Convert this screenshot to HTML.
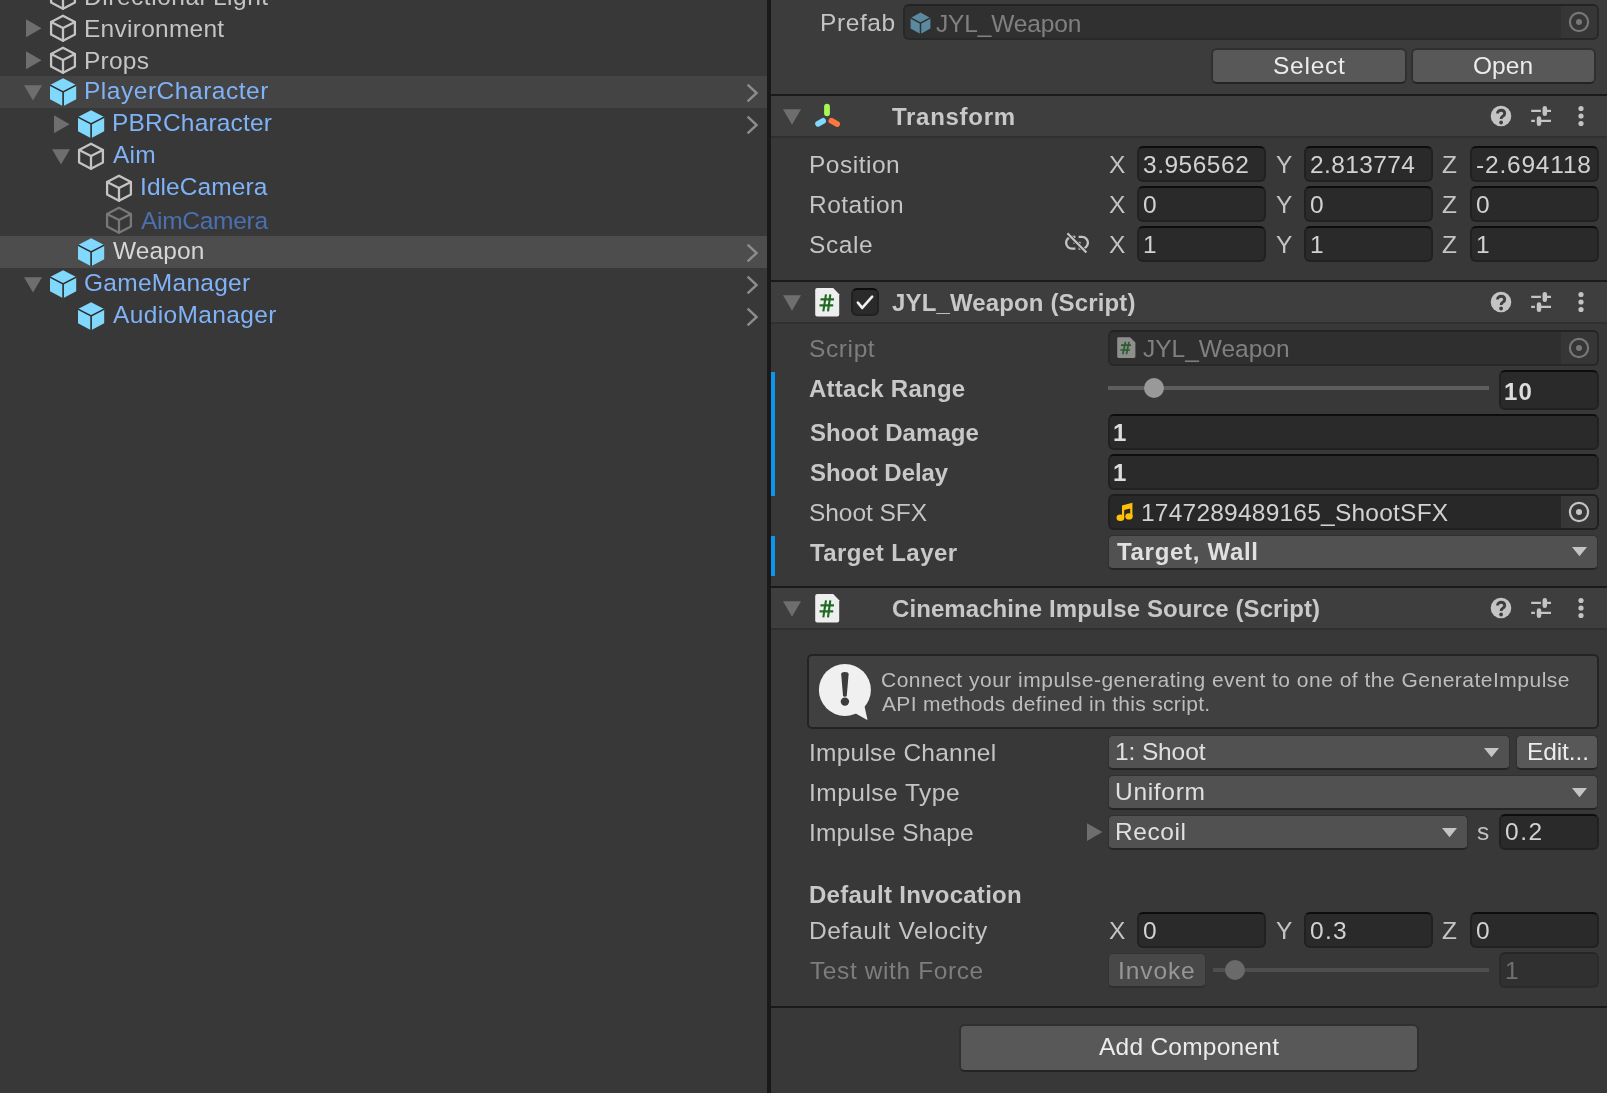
<!DOCTYPE html>
<html><head><meta charset="utf-8"><title>Unity</title>
<style>
html,body{margin:0;padding:0;background:#383838;}
body{width:1607px;height:1093px;position:relative;overflow:hidden;font-family:"Liberation Sans",sans-serif;}
.b{position:absolute;display:block;}
.t{position:absolute;white-space:pre;line-height:1;will-change:transform;}
</style></head><body>
<div class="b" style="left:0.00px;top:0.00px;width:767.00px;height:1093.00px;background:#383838;"></div>
<div class="b" style="left:0.00px;top:76.00px;width:767.00px;height:32.00px;background:#444444;"></div>
<div class="b" style="left:0.00px;top:236.00px;width:767.00px;height:32.00px;background:#4d4d4d;"></div>
<svg class="b" style="left:49.00px;top:-19.00px" width="28" height="31" viewBox="0 0 28 31"><g fill="none" stroke="#c4c4c4" stroke-width="2.3" stroke-linejoin="round" stroke-linecap="round"><path d="M14 2.7 L25.9 8.9 V21.4 L14 27.8 L2.1 21.4 V8.9 Z"/><path d="M2.1 8.9 L14 15 L25.9 8.9 M14 15 V27.8"/></g></svg>
<span class="t" style="left:83.99px;top:-15px;font-size:24.5px;color:#c4c4c4;letter-spacing:0.531px;">Directional Light</span>
<svg class="b" style="left:49.00px;top:13.00px" width="28" height="31" viewBox="0 0 28 31"><g fill="none" stroke="#c4c4c4" stroke-width="2.3" stroke-linejoin="round" stroke-linecap="round"><path d="M14 2.7 L25.9 8.9 V21.4 L14 27.8 L2.1 21.4 V8.9 Z"/><path d="M2.1 8.9 L14 15 L25.9 8.9 M14 15 V27.8"/></g></svg>
<svg class="b" style="left:26.00px;top:12.00px" width="18" height="32" viewBox="0 0 18 32"><path d="M0 7.3 L0 25.2 L15.6 16.25 Z" fill="#6e6e6e"/></svg>
<span class="t" style="left:83.99px;top:17px;font-size:24.5px;color:#c4c4c4;letter-spacing:0.264px;">Environment</span>
<svg class="b" style="left:49.00px;top:45.00px" width="28" height="31" viewBox="0 0 28 31"><g fill="none" stroke="#c4c4c4" stroke-width="2.3" stroke-linejoin="round" stroke-linecap="round"><path d="M14 2.7 L25.9 8.9 V21.4 L14 27.8 L2.1 21.4 V8.9 Z"/><path d="M2.1 8.9 L14 15 L25.9 8.9 M14 15 V27.8"/></g></svg>
<svg class="b" style="left:26.00px;top:44.00px" width="18" height="32" viewBox="0 0 18 32"><path d="M0 7.3 L0 25.2 L15.6 16.25 Z" fill="#6e6e6e"/></svg>
<span class="t" style="left:83.99px;top:49px;font-size:24.5px;color:#c4c4c4;letter-spacing:0.220px;">Props</span>
<svg class="b" style="left:49.00px;top:77.00px" width="29" height="31" viewBox="0 0 29 31"><path d="M14.1 1.2 L27.2 8.1 V22.2 L14.1 29.2 L1 22.2 V8.1 Z" fill="#80d8fd"/><g fill="none" stroke="#2e2a2a" stroke-width="1.6"><path d="M1 8.1 L14.1 14.9 L27.2 8.1 M14.1 14.9 V29.2"/></g></svg>
<svg class="b" style="left:24.00px;top:76.00px" width="20" height="32" viewBox="0 0 20 32"><path d="M0 9.2 L18 9.2 L9 24.6 Z" fill="#6e6e6e"/></svg>
<svg class="b" style="left:745.00px;top:76.00px" width="16" height="32" viewBox="0 0 16 32"><path d="M2.6 8.6 L11.6 17 L2.6 25.4" fill="none" stroke="#8c8c8c" stroke-width="2.4"/></svg>
<span class="t" style="left:83.99px;top:79px;font-size:24.5px;color:#80b2f8;letter-spacing:0.529px;">PlayerCharacter</span>
<svg class="b" style="left:77.00px;top:109.00px" width="29" height="31" viewBox="0 0 29 31"><path d="M14.1 1.2 L27.2 8.1 V22.2 L14.1 29.2 L1 22.2 V8.1 Z" fill="#80d8fd"/><g fill="none" stroke="#2e2a2a" stroke-width="1.6"><path d="M1 8.1 L14.1 14.9 L27.2 8.1 M14.1 14.9 V29.2"/></g></svg>
<svg class="b" style="left:54.00px;top:108.00px" width="18" height="32" viewBox="0 0 18 32"><path d="M0 7.3 L0 25.2 L15.6 16.25 Z" fill="#6e6e6e"/></svg>
<svg class="b" style="left:745.00px;top:108.00px" width="16" height="32" viewBox="0 0 16 32"><path d="M2.6 8.6 L11.6 17 L2.6 25.4" fill="none" stroke="#8c8c8c" stroke-width="2.4"/></svg>
<span class="t" style="left:112.39px;top:111px;font-size:24.5px;color:#80b2f8;letter-spacing:0.188px;">PBRCharacter</span>
<svg class="b" style="left:77.00px;top:141.00px" width="28" height="31" viewBox="0 0 28 31"><g fill="none" stroke="#c4c4c4" stroke-width="2.3" stroke-linejoin="round" stroke-linecap="round"><path d="M14 2.7 L25.9 8.9 V21.4 L14 27.8 L2.1 21.4 V8.9 Z"/><path d="M2.1 8.9 L14 15 L25.9 8.9 M14 15 V27.8"/></g></svg>
<svg class="b" style="left:52.00px;top:140.00px" width="20" height="32" viewBox="0 0 20 32"><path d="M0 9.2 L18 9.2 L9 24.6 Z" fill="#6e6e6e"/></svg>
<span class="t" style="left:112.95px;top:143px;font-size:24.5px;color:#80b2f8;letter-spacing:0.230px;">Aim</span>
<svg class="b" style="left:105.00px;top:173.00px" width="28" height="31" viewBox="0 0 28 31"><g fill="none" stroke="#c4c4c4" stroke-width="2.3" stroke-linejoin="round" stroke-linecap="round"><path d="M14 2.7 L25.9 8.9 V21.4 L14 27.8 L2.1 21.4 V8.9 Z"/><path d="M2.1 8.9 L14 15 L25.9 8.9 M14 15 V27.8"/></g></svg>
<span class="t" style="left:139.74px;top:175px;font-size:24.5px;color:#80b2f8;letter-spacing:0.069px;">IdleCamera</span>
<svg class="b" style="left:105.00px;top:205.00px" width="28" height="31" viewBox="0 0 28 31"><g fill="none" stroke="#787878" stroke-width="2.3" stroke-linejoin="round" stroke-linecap="round"><path d="M14 2.7 L25.9 8.9 V21.4 L14 27.8 L2.1 21.4 V8.9 Z"/><path d="M2.1 8.9 L14 15 L25.9 8.9 M14 15 V27.8"/></g></svg>
<span class="t" style="left:140.95px;top:209px;font-size:24.5px;color:#4a70b0;letter-spacing:-0.287px;">AimCamera</span>
<svg class="b" style="left:77.00px;top:237.00px" width="29" height="31" viewBox="0 0 29 31"><path d="M14.1 1.2 L27.2 8.1 V22.2 L14.1 29.2 L1 22.2 V8.1 Z" fill="#80d8fd"/><g fill="none" stroke="#2e2a2a" stroke-width="1.6"><path d="M1 8.1 L14.1 14.9 L27.2 8.1 M14.1 14.9 V29.2"/></g></svg>
<svg class="b" style="left:745.00px;top:236.00px" width="16" height="32" viewBox="0 0 16 32"><path d="M2.6 8.6 L11.6 17 L2.6 25.4" fill="none" stroke="#8c8c8c" stroke-width="2.4"/></svg>
<span class="t" style="left:113.29px;top:239px;font-size:24.5px;color:#d6d6d6;letter-spacing:0.097px;">Weapon</span>
<svg class="b" style="left:49.00px;top:269.00px" width="29" height="31" viewBox="0 0 29 31"><path d="M14.1 1.2 L27.2 8.1 V22.2 L14.1 29.2 L1 22.2 V8.1 Z" fill="#80d8fd"/><g fill="none" stroke="#2e2a2a" stroke-width="1.6"><path d="M1 8.1 L14.1 14.9 L27.2 8.1 M14.1 14.9 V29.2"/></g></svg>
<svg class="b" style="left:24.00px;top:268.00px" width="20" height="32" viewBox="0 0 20 32"><path d="M0 9.2 L18 9.2 L9 24.6 Z" fill="#6e6e6e"/></svg>
<svg class="b" style="left:745.00px;top:268.00px" width="16" height="32" viewBox="0 0 16 32"><path d="M2.6 8.6 L11.6 17 L2.6 25.4" fill="none" stroke="#8c8c8c" stroke-width="2.4"/></svg>
<span class="t" style="left:84.27px;top:271px;font-size:24.5px;color:#80b2f8;letter-spacing:0.272px;">GameManager</span>
<svg class="b" style="left:77.00px;top:301.00px" width="29" height="31" viewBox="0 0 29 31"><path d="M14.1 1.2 L27.2 8.1 V22.2 L14.1 29.2 L1 22.2 V8.1 Z" fill="#80d8fd"/><g fill="none" stroke="#2e2a2a" stroke-width="1.6"><path d="M1 8.1 L14.1 14.9 L27.2 8.1 M14.1 14.9 V29.2"/></g></svg>
<svg class="b" style="left:745.00px;top:300.00px" width="16" height="32" viewBox="0 0 16 32"><path d="M2.6 8.6 L11.6 17 L2.6 25.4" fill="none" stroke="#8c8c8c" stroke-width="2.4"/></svg>
<span class="t" style="left:112.95px;top:303px;font-size:24.5px;color:#80b2f8;letter-spacing:0.372px;">AudioManager</span>
<div class="b" style="left:767.00px;top:0.00px;width:4.00px;height:1093.00px;background:#191919;"></div>
<div class="b" style="left:771.00px;top:0.00px;width:836.00px;height:1093.00px;background:#383838;"></div>
<div class="b" style="left:771.00px;top:0.00px;width:836.00px;height:94.00px;background:#3c3c3c;"></div>
<span class="t" style="left:820.39px;top:11px;font-size:24.5px;color:#c4c4c4;letter-spacing:0.610px;">Prefab</span>
<div class="b" style="left:903px;top:4px;width:696px;height:36px;background:#303030;box-sizing:border-box;border:2px solid #282828;border-top-color:#232323;border-radius:6px;"></div>
<div class="b" style="left:1561.00px;top:6.00px;width:36.00px;height:32.00px;background:#363636;border-radius:0 4px 4px 0;"></div>
<svg class="b" style="left:910.40px;top:12.00px" width="22" height="23" viewBox="0 0 22 23"><path d="M10.5 0.6 L20.4 5.9 V16.6 L10.5 22 L0.6 16.6 V5.9 Z" fill="#5b899f"/><path d="M0.6 5.9 L10.5 11.2 L20.4 5.9 M10.5 11.2 V22" fill="none" stroke="#303030" stroke-width="1.5"/></svg>
<span class="t" style="left:935.62px;top:12px;font-size:24.5px;color:#808080;letter-spacing:-0.142px;">JYL_Weapon</span>
<svg class="b" style="left:1567.00px;top:10.00px" width="24" height="24" viewBox="0 0 24 24"><circle cx="12" cy="12" r="9.1" fill="none" stroke="#777" stroke-width="2.2"/><circle cx="12" cy="12" r="3" fill="#777"/></svg>
<div class="b" style="left:1211px;top:48px;width:196px;height:36px;background:#585858;box-sizing:border-box;border:2px solid #303030;border-bottom:2px solid #242424;border-radius:6px;"></div>
<div class="b" style="left:1411px;top:48px;width:185px;height:36px;background:#585858;box-sizing:border-box;border:2px solid #303030;border-bottom:2px solid #242424;border-radius:6px;"></div>
<span class="t" style="left:1272.89px;top:54px;font-size:24.5px;color:#ececec;letter-spacing:0.740px;">Select</span>
<span class="t" style="left:1472.94px;top:54px;font-size:24.5px;color:#ececec;letter-spacing:0.038px;">Open</span>
<div class="b" style="left:771.00px;top:94.00px;width:836.00px;height:2.00px;background:#1a1a1a;"></div>
<div class="b" style="left:771.00px;top:96.00px;width:836.00px;height:40.00px;background:#3e3e3e;"></div>
<div class="b" style="left:771.00px;top:136.00px;width:836.00px;height:2.00px;background:#303030;"></div>
<svg class="b" style="left:783.00px;top:108.80px" width="18" height="16" viewBox="0 0 18 16"><path d="M0 0.2 L18 0.2 L9 15.8 Z" fill="#6e6e6e"/></svg>
<svg class="b" style="left:1490.00px;top:105.00px" width="22" height="22" viewBox="0 0 22 22"><circle cx="11" cy="11" r="10.3" fill="#c4c4c4"/><path d="M7.5 8.4 C7.5 4.2 14.7 4.2 14.7 8.5 C14.7 11.2 11.1 11.2 11.1 13.9" fill="none" stroke="#3e3e3e" stroke-width="2.9" stroke-linecap="butt"/><circle cx="11.1" cy="17.5" r="1.9" fill="#3e3e3e"/></svg>
<svg class="b" style="left:1530.00px;top:105.00px" width="22" height="22" viewBox="0 0 22 22"><g stroke="#c4c4c4" fill="none"><path d="M1.2 5.9 H10.9 M16.8 5.9 H21 M1.2 15.9 H4.9 M10.9 15.9 H21" stroke-width="2.3"/><path d="M14.8 3.3 V8.8 M9 13.4 V18.7" stroke-width="4.5" stroke-linecap="round"/></g></svg>
<svg class="b" style="left:1577.00px;top:105.00px" width="8" height="22" viewBox="0 0 8 22"><circle cx="4" cy="3.5" r="2.6" fill="#c4c4c4"/><circle cx="4" cy="11" r="2.6" fill="#c4c4c4"/><circle cx="4" cy="18.5" r="2.6" fill="#c4c4c4"/></svg>
<span class="t" style="left:892.33px;top:105px;font-size:24px;color:#c8c8c8;letter-spacing:0.710px;font-weight:bold;">Transform</span>
<svg class="b" style="left:812.00px;top:101.00px" width="32" height="30" viewBox="0 0 32 30"><g fill="none" stroke-linecap="round" stroke-width="5.8"><path d="M15 5.7 V12.3" stroke="#a8f755"/><path d="M6.1 22.8 L11.1 19.9" stroke="#80d8ff"/><path d="M19.4 19.8 L25.1 23" stroke="#ff7540"/></g></svg>
<span class="t" style="left:808.89px;top:153px;font-size:24.5px;color:#c4c4c4;letter-spacing:0.504px;">Position</span>
<span class="t" style="left:1108.85px;top:153px;font-size:24.5px;color:#c4c4c4;">X</span>
<div class="b" style="left:1137px;top:146px;width:129px;height:36px;background:#2a2a2a;box-sizing:border-box;border:2px solid #212121;border-top-color:#0d0d0d;border-radius:6px;"></div>
<span class="t" style="left:1143.47px;top:153px;font-size:24.5px;color:#d2d2d2;letter-spacing:0.511px;">3.956562</span>
<span class="t" style="left:1275.76px;top:153px;font-size:24.5px;color:#c4c4c4;">Y</span>
<div class="b" style="left:1304px;top:146px;width:129px;height:36px;background:#2a2a2a;box-sizing:border-box;border:2px solid #212121;border-top-color:#0d0d0d;border-radius:6px;"></div>
<span class="t" style="left:1310.17px;top:153px;font-size:24.5px;color:#d2d2d2;letter-spacing:0.380px;">2.813774</span>
<span class="t" style="left:1442.42px;top:153px;font-size:24.5px;color:#c4c4c4;">Z</span>
<div class="b" style="left:1470px;top:146px;width:129px;height:36px;background:#2a2a2a;box-sizing:border-box;border:2px solid #212121;border-top-color:#0d0d0d;border-radius:6px;"></div>
<span class="t" style="left:1476.31px;top:153px;font-size:24.5px;color:#d2d2d2;letter-spacing:0.803px;">-2.694118</span>
<span class="t" style="left:808.89px;top:193px;font-size:24.5px;color:#c4c4c4;letter-spacing:0.491px;">Rotation</span>
<span class="t" style="left:1108.85px;top:193px;font-size:24.5px;color:#c4c4c4;">X</span>
<div class="b" style="left:1137px;top:186px;width:129px;height:36px;background:#2a2a2a;box-sizing:border-box;border:2px solid #212121;border-top-color:#0d0d0d;border-radius:6px;"></div>
<span class="t" style="left:1143.44px;top:193px;font-size:24.5px;color:#d2d2d2;">0</span>
<span class="t" style="left:1275.76px;top:193px;font-size:24.5px;color:#c4c4c4;">Y</span>
<div class="b" style="left:1304px;top:186px;width:129px;height:36px;background:#2a2a2a;box-sizing:border-box;border:2px solid #212121;border-top-color:#0d0d0d;border-radius:6px;"></div>
<span class="t" style="left:1310.44px;top:193px;font-size:24.5px;color:#d2d2d2;">0</span>
<span class="t" style="left:1442.42px;top:193px;font-size:24.5px;color:#c4c4c4;">Z</span>
<div class="b" style="left:1470px;top:186px;width:129px;height:36px;background:#2a2a2a;box-sizing:border-box;border:2px solid #212121;border-top-color:#0d0d0d;border-radius:6px;"></div>
<span class="t" style="left:1476.44px;top:193px;font-size:24.5px;color:#d2d2d2;">0</span>
<span class="t" style="left:809.49px;top:233px;font-size:24.5px;color:#c4c4c4;letter-spacing:0.576px;">Scale</span>
<span class="t" style="left:1108.85px;top:233px;font-size:24.5px;color:#c4c4c4;">X</span>
<div class="b" style="left:1137px;top:226px;width:129px;height:36px;background:#2a2a2a;box-sizing:border-box;border:2px solid #212121;border-top-color:#0d0d0d;border-radius:6px;"></div>
<span class="t" style="left:1142.53px;top:233px;font-size:24.5px;color:#d2d2d2;">1</span>
<span class="t" style="left:1275.76px;top:233px;font-size:24.5px;color:#c4c4c4;">Y</span>
<div class="b" style="left:1304px;top:226px;width:129px;height:36px;background:#2a2a2a;box-sizing:border-box;border:2px solid #212121;border-top-color:#0d0d0d;border-radius:6px;"></div>
<span class="t" style="left:1309.53px;top:233px;font-size:24.5px;color:#d2d2d2;">1</span>
<span class="t" style="left:1442.42px;top:233px;font-size:24.5px;color:#c4c4c4;">Z</span>
<div class="b" style="left:1470px;top:226px;width:129px;height:36px;background:#2a2a2a;box-sizing:border-box;border:2px solid #212121;border-top-color:#0d0d0d;border-radius:6px;"></div>
<span class="t" style="left:1475.53px;top:233px;font-size:24.5px;color:#d2d2d2;">1</span>
<svg class="b" style="left:1063.00px;top:231.00px" width="28" height="24" viewBox="0 0 28 24"><g fill="none" stroke="#c4c4c4" stroke-width="2.3"><path d="M12.4 5.9 H9 A5.9 5.9 0 0 0 9 17.7 H12.4"/><path d="M15.6 5.9 H19 A5.9 5.9 0 0 1 19 17.7 H15.6"/><path d="M10.4 11.8 H17.6" stroke-width="2"/></g><path d="M3.2 1.4 L24.4 22.6" stroke="#383838" stroke-width="4"/><path d="M4.4 2.3 L23.4 21.6" stroke="#c4c4c4" stroke-width="2.2"/></svg>
<div class="b" style="left:771.00px;top:280.00px;width:836.00px;height:2.00px;background:#1a1a1a;"></div>
<div class="b" style="left:771.00px;top:282.00px;width:836.00px;height:40.00px;background:#3e3e3e;"></div>
<div class="b" style="left:771.00px;top:322.00px;width:836.00px;height:2.00px;background:#303030;"></div>
<svg class="b" style="left:783.00px;top:294.80px" width="18" height="16" viewBox="0 0 18 16"><path d="M0 0.2 L18 0.2 L9 15.8 Z" fill="#6e6e6e"/></svg>
<svg class="b" style="left:1490.00px;top:291.00px" width="22" height="22" viewBox="0 0 22 22"><circle cx="11" cy="11" r="10.3" fill="#c4c4c4"/><path d="M7.5 8.4 C7.5 4.2 14.7 4.2 14.7 8.5 C14.7 11.2 11.1 11.2 11.1 13.9" fill="none" stroke="#3e3e3e" stroke-width="2.9" stroke-linecap="butt"/><circle cx="11.1" cy="17.5" r="1.9" fill="#3e3e3e"/></svg>
<svg class="b" style="left:1530.00px;top:291.00px" width="22" height="22" viewBox="0 0 22 22"><g stroke="#c4c4c4" fill="none"><path d="M1.2 5.9 H10.9 M16.8 5.9 H21 M1.2 15.9 H4.9 M10.9 15.9 H21" stroke-width="2.3"/><path d="M14.8 3.3 V8.8 M9 13.4 V18.7" stroke-width="4.5" stroke-linecap="round"/></g></svg>
<svg class="b" style="left:1577.00px;top:291.00px" width="8" height="22" viewBox="0 0 8 22"><circle cx="4" cy="3.5" r="2.6" fill="#c4c4c4"/><circle cx="4" cy="11" r="2.6" fill="#c4c4c4"/><circle cx="4" cy="18.5" r="2.6" fill="#c4c4c4"/></svg>
<span class="t" style="left:892.24px;top:291px;font-size:24px;color:#c8c8c8;letter-spacing:0.140px;font-weight:bold;">JYL_Weapon (Script)</span>
<svg class="b" style="left:815.00px;top:287.70px" width="25" height="29" viewBox="0 0 25 29"><path d="M2.2 0 H18.2 L24.2 6.2 V26.4 Q24.2 28.4 22.2 28.4 H2.2 Q0.2 28.4 0.2 26.4 V2 Q0.2 0 2.2 0 Z" fill="#eeeeee"/><g stroke="#1f6b22" stroke-width="2.15" fill="none"><path d="M11 6.4 L8.3 23.3 M15.3 6.4 L13 23.3 M5.5 11.3 H19 M4.5 17.4 H18.2"/></g></svg>
<div class="b" style="left:851px;top:288px;width:28px;height:28px;background:#2a2a2a;box-sizing:border-box;border:2px solid #212121;border-top-color:#0d0d0d;border-radius:6px;"></div>
<svg class="b" style="left:853.00px;top:291.00px" width="24" height="22" viewBox="0 0 24 22"><path d="M4.9 11.6 L9.2 16.9 L19.2 5.6" fill="none" stroke="#efefef" stroke-width="2.6" stroke-linecap="round" stroke-linejoin="round"/></svg>
<div class="b" style="left:771.00px;top:372.00px;width:4.00px;height:123.60px;background:#0d96ee;"></div>
<div class="b" style="left:771.00px;top:536.00px;width:4.00px;height:40.00px;background:#0d96ee;"></div>
<span class="t" style="left:809.49px;top:337px;font-size:24.5px;color:#7d7d7d;letter-spacing:0.610px;">Script</span>
<div class="b" style="left:1108px;top:330px;width:491px;height:36px;background:#2f2f2f;box-sizing:border-box;border:2px solid #282828;border-top-color:#232323;border-radius:6px;"></div>
<div class="b" style="left:1561.00px;top:332.00px;width:36.00px;height:32.00px;background:#363636;border-radius:0 4px 4px 0;"></div>
<svg class="b" style="left:1117.00px;top:337.40px" width="19" height="21.4" viewBox="0 0 19 21.4"><path d="M1.5 0.2 H13 L18.4 5.6 V19.6 Q18.4 21 17 21 H1.5 Q0.2 21 0.2 19.6 V1.6 Q0.2 0.2 1.5 0.2 Z" fill="#8e8e8e"/><g stroke="#2a5c2c" stroke-width="1.65" fill="none"><path d="M8.5 4.8 L5.8 17.3 M12 4.8 L9.4 17.3 M4 8.1 H14 M3.4 13 H13"/></g></svg>
<span class="t" style="left:1142.62px;top:337px;font-size:24.5px;color:#808080;letter-spacing:-0.009px;">JYL_Weapon</span>
<svg class="b" style="left:1567.00px;top:336.20px" width="24" height="24" viewBox="0 0 24 24"><circle cx="12" cy="12" r="9.1" fill="none" stroke="#777" stroke-width="2.2"/><circle cx="12" cy="12" r="3" fill="#777"/></svg>
<span class="t" style="left:809.20px;top:377px;font-size:24px;color:#c8c8c8;letter-spacing:0.258px;font-weight:bold;">Attack Range</span>
<div class="b" style="left:1108.00px;top:386.00px;width:381.00px;height:4.00px;background:#5e5e5e;"></div>
<div class="b" style="left:1144.2px;top:377.8px;width:20px;height:20px;border-radius:50%;background:#999"></div>
<div class="b" style="left:1499px;top:370px;width:100px;height:40px;background:#2a2a2a;box-sizing:border-box;border:2px solid #212121;border-top-color:#0d0d0d;border-radius:6px;"></div>
<span class="t" style="left:1504.29px;top:380px;font-size:24px;color:#dcdcdc;letter-spacing:1.193px;font-weight:bold;">10</span>
<span class="t" style="left:809.91px;top:421px;font-size:24px;color:#c8c8c8;letter-spacing:0.080px;font-weight:bold;">Shoot Damage</span>
<div class="b" style="left:1108px;top:414px;width:491px;height:36px;background:#2a2a2a;box-sizing:border-box;border:2px solid #212121;border-top-color:#0d0d0d;border-radius:6px;"></div>
<span class="t" style="left:1113.39px;top:421px;font-size:24px;color:#dcdcdc;font-weight:bold;">1</span>
<span class="t" style="left:809.91px;top:461px;font-size:24px;color:#c8c8c8;letter-spacing:-0.048px;font-weight:bold;">Shoot Delay</span>
<div class="b" style="left:1108px;top:454px;width:491px;height:36px;background:#2a2a2a;box-sizing:border-box;border:2px solid #212121;border-top-color:#0d0d0d;border-radius:6px;"></div>
<span class="t" style="left:1113.39px;top:461px;font-size:24px;color:#dcdcdc;font-weight:bold;">1</span>
<span class="t" style="left:809.49px;top:501px;font-size:24.5px;color:#c4c4c4;letter-spacing:-0.057px;">Shoot SFX</span>
<div class="b" style="left:1108px;top:494px;width:491px;height:36px;background:#282828;box-sizing:border-box;border:2px solid #202020;border-top-color:#1e1e1e;border-radius:6px;"></div>
<div class="b" style="left:1561.00px;top:496.00px;width:36.00px;height:32.00px;background:#373737;border-radius:0 4px 4px 0;"></div>
<svg class="b" style="left:1116.00px;top:502.00px" width="18" height="20" viewBox="0 0 18 20"><g fill="#ffc107"><ellipse cx="4.4" cy="15.8" rx="3.9" ry="3.3"/><ellipse cx="13" cy="14.4" rx="3.7" ry="3.1"/><path d="M6 3.4 L16.4 0.8 V14.4 H14.2 V6.6 L8.2 8 V15.8 H6 Z"/></g></svg>
<span class="t" style="left:1141.33px;top:501px;font-size:24.5px;color:#d2d2d2;letter-spacing:0.226px;">1747289489165_ShootSFX</span>
<svg class="b" style="left:1567.00px;top:500.00px" width="24" height="24" viewBox="0 0 24 24"><circle cx="12" cy="12" r="9.1" fill="none" stroke="#c4c4c4" stroke-width="2.2"/><circle cx="12" cy="12" r="3" fill="#c4c4c4"/></svg>
<span class="t" style="left:810.33px;top:541px;font-size:24px;color:#c8c8c8;letter-spacing:0.432px;font-weight:bold;">Target Layer</span>
<div class="b" style="left:1108px;top:535px;width:490px;height:35px;background:#515151;box-sizing:border-box;border:1px solid #303030;border-bottom:2px solid #242424;border-radius:5px;"></div>
<span class="t" style="left:1116.73px;top:540px;font-size:24px;color:#e0e0e0;letter-spacing:0.692px;font-weight:bold;">Target, Wall</span>
<svg class="b" style="left:1571.60px;top:547.40px" width="15" height="10" viewBox="0 0 15 10"><path d="M0 0 L15 0 L7.5 9.2 Z" fill="#c4c4c4"/></svg>
<div class="b" style="left:771.00px;top:586.00px;width:836.00px;height:2.00px;background:#1a1a1a;"></div>
<div class="b" style="left:771.00px;top:588.00px;width:836.00px;height:40.00px;background:#3e3e3e;"></div>
<div class="b" style="left:771.00px;top:628.00px;width:836.00px;height:2.00px;background:#303030;"></div>
<svg class="b" style="left:783.00px;top:600.80px" width="18" height="16" viewBox="0 0 18 16"><path d="M0 0.2 L18 0.2 L9 15.8 Z" fill="#6e6e6e"/></svg>
<svg class="b" style="left:1490.00px;top:597.00px" width="22" height="22" viewBox="0 0 22 22"><circle cx="11" cy="11" r="10.3" fill="#c4c4c4"/><path d="M7.5 8.4 C7.5 4.2 14.7 4.2 14.7 8.5 C14.7 11.2 11.1 11.2 11.1 13.9" fill="none" stroke="#3e3e3e" stroke-width="2.9" stroke-linecap="butt"/><circle cx="11.1" cy="17.5" r="1.9" fill="#3e3e3e"/></svg>
<svg class="b" style="left:1530.00px;top:597.00px" width="22" height="22" viewBox="0 0 22 22"><g stroke="#c4c4c4" fill="none"><path d="M1.2 5.9 H10.9 M16.8 5.9 H21 M1.2 15.9 H4.9 M10.9 15.9 H21" stroke-width="2.3"/><path d="M14.8 3.3 V8.8 M9 13.4 V18.7" stroke-width="4.5" stroke-linecap="round"/></g></svg>
<svg class="b" style="left:1577.00px;top:597.00px" width="8" height="22" viewBox="0 0 8 22"><circle cx="4" cy="3.5" r="2.6" fill="#c4c4c4"/><circle cx="4" cy="11" r="2.6" fill="#c4c4c4"/><circle cx="4" cy="18.5" r="2.6" fill="#c4c4c4"/></svg>
<span class="t" style="left:891.62px;top:597px;font-size:24px;color:#c8c8c8;letter-spacing:0.078px;font-weight:bold;">Cinemachine Impulse Source (Script)</span>
<svg class="b" style="left:815.00px;top:593.70px" width="25" height="29" viewBox="0 0 25 29"><path d="M2.2 0 H18.2 L24.2 6.2 V26.4 Q24.2 28.4 22.2 28.4 H2.2 Q0.2 28.4 0.2 26.4 V2 Q0.2 0 2.2 0 Z" fill="#eeeeee"/><g stroke="#1f6b22" stroke-width="2.15" fill="none"><path d="M11 6.4 L8.3 23.3 M15.3 6.4 L13 23.3 M5.5 11.3 H19 M4.5 17.4 H18.2"/></g></svg>
<div class="b" style="left:807.4px;top:654.2px;width:791.2px;height:75.2px;background:#404040;border-radius:5px;box-shadow:inset 0 0 0 2px #232323"></div>
<svg class="b" style="left:817.00px;top:662.00px" width="56" height="60" viewBox="0 0 56 60"><circle cx="27.9" cy="27.9" r="26" fill="#f0f0f0"/><path d="M36 50 L49.8 57.8 Q50.6 58 50.4 57.2 L47 42 Z" fill="#f0f0f0"/><path d="M24.2 12.2 Q24.2 10 27.9 10 Q31.6 10 31.6 12.2 L29.8 33.4 Q29.6 34.8 27.9 34.8 Q26.2 34.8 26 33.4 Z" fill="#3c3c3c"/><circle cx="27.9" cy="39.6" r="4.2" fill="#3c3c3c"/></svg>
<span class="t" style="left:880.73px;top:669px;font-size:21px;color:#bdbdbd;letter-spacing:0.491px;">Connect your impulse-generating event to one of the GenerateImpulse</span>
<span class="t" style="left:881.76px;top:693px;font-size:21px;color:#bdbdbd;letter-spacing:0.313px;">API methods defined in this script.</span>
<span class="t" style="left:808.54px;top:741px;font-size:24.5px;color:#c4c4c4;letter-spacing:0.231px;">Impulse Channel</span>
<div class="b" style="left:1108px;top:735px;width:402px;height:35px;background:#515151;box-sizing:border-box;border:1px solid #303030;border-bottom:2px solid #242424;border-radius:5px;"></div>
<span class="t" style="left:1114.73px;top:740px;font-size:24.5px;color:#e0e0e0;letter-spacing:-0.117px;">1: Shoot</span>
<svg class="b" style="left:1483.50px;top:747.60px" width="15" height="10" viewBox="0 0 15 10"><path d="M0 0 L15 0 L7.5 9.2 Z" fill="#c4c4c4"/></svg>
<div class="b" style="left:1516px;top:735px;width:82px;height:35px;background:#585858;box-sizing:border-box;border:1px solid #303030;border-bottom:2px solid #242424;border-radius:5px;"></div>
<span class="t" style="left:1526.59px;top:740px;font-size:24.5px;color:#ececec;letter-spacing:-0.116px;">Edit...</span>
<span class="t" style="left:808.54px;top:781px;font-size:24.5px;color:#c4c4c4;letter-spacing:0.480px;">Impulse Type</span>
<div class="b" style="left:1108px;top:775px;width:490px;height:35px;background:#515151;box-sizing:border-box;border:1px solid #303030;border-bottom:2px solid #242424;border-radius:5px;"></div>
<span class="t" style="left:1114.71px;top:780px;font-size:24.5px;color:#e0e0e0;letter-spacing:0.690px;">Uniform</span>
<svg class="b" style="left:1571.60px;top:787.60px" width="15" height="10" viewBox="0 0 15 10"><path d="M0 0 L15 0 L7.5 9.2 Z" fill="#c4c4c4"/></svg>
<span class="t" style="left:808.54px;top:821px;font-size:24.5px;color:#c4c4c4;letter-spacing:0.093px;">Impulse Shape</span>
<svg class="b" style="left:1087.40px;top:823.40px" width="16" height="19" viewBox="0 0 16 19"><path d="M0 0.2 L0 18 L15.4 9.1 Z" fill="#6e6e6e"/></svg>
<div class="b" style="left:1108px;top:815px;width:360px;height:35px;background:#515151;box-sizing:border-box;border:1px solid #303030;border-bottom:2px solid #242424;border-radius:5px;"></div>
<span class="t" style="left:1114.59px;top:820px;font-size:24.5px;color:#e0e0e0;letter-spacing:0.591px;">Recoil</span>
<svg class="b" style="left:1442.00px;top:827.60px" width="15" height="10" viewBox="0 0 15 10"><path d="M0 0 L15 0 L7.5 9.2 Z" fill="#c4c4c4"/></svg>
<span class="t" style="left:1477.32px;top:820px;font-size:24.5px;color:#c4c4c4;">s</span>
<div class="b" style="left:1499px;top:814px;width:100px;height:36px;background:#2a2a2a;box-sizing:border-box;border:2px solid #212121;border-top-color:#0d0d0d;border-radius:6px;"></div>
<span class="t" style="left:1505.04px;top:820px;font-size:24.5px;color:#d2d2d2;letter-spacing:1.563px;">0.2</span>
<span class="t" style="left:809.19px;top:883px;font-size:24px;color:#c8c8c8;letter-spacing:0.274px;font-weight:bold;">Default Invocation</span>
<span class="t" style="left:808.79px;top:919px;font-size:24.5px;color:#c4c4c4;letter-spacing:0.626px;">Default Velocity</span>
<span class="t" style="left:1108.85px;top:919px;font-size:24.5px;color:#c4c4c4;">X</span>
<div class="b" style="left:1137px;top:912px;width:129px;height:36px;background:#2a2a2a;box-sizing:border-box;border:2px solid #212121;border-top-color:#0d0d0d;border-radius:6px;"></div>
<span class="t" style="left:1143.44px;top:919px;font-size:24.5px;color:#d2d2d2;">0</span>
<span class="t" style="left:1275.76px;top:919px;font-size:24.5px;color:#c4c4c4;">Y</span>
<div class="b" style="left:1304px;top:912px;width:129px;height:36px;background:#2a2a2a;box-sizing:border-box;border:2px solid #212121;border-top-color:#0d0d0d;border-radius:6px;"></div>
<span class="t" style="left:1310.44px;top:919px;font-size:24.5px;color:#d2d2d2;letter-spacing:1.286px;">0.3</span>
<span class="t" style="left:1442.42px;top:919px;font-size:24.5px;color:#c4c4c4;">Z</span>
<div class="b" style="left:1470px;top:912px;width:129px;height:36px;background:#2a2a2a;box-sizing:border-box;border:2px solid #212121;border-top-color:#0d0d0d;border-radius:6px;"></div>
<span class="t" style="left:1476.44px;top:919px;font-size:24.5px;color:#d2d2d2;">0</span>
<span class="t" style="left:809.85px;top:959px;font-size:24.5px;color:#7d7d7d;letter-spacing:0.606px;">Test with Force</span>
<div class="b" style="left:1108px;top:953px;width:98px;height:35px;background:#484848;border-radius:5px;box-sizing:border-box;border:1px solid #343434;border-bottom:2px solid #2e2e2e"></div>
<span class="t" style="left:1118.34px;top:959px;font-size:24.5px;color:#969696;letter-spacing:0.912px;">Invoke</span>
<div class="b" style="left:1213.00px;top:968.00px;width:276.00px;height:4.00px;background:#4e4e4e;"></div>
<div class="b" style="left:1224.8px;top:960px;width:20px;height:20px;border-radius:50%;background:#6a6a6a"></div>
<div class="b" style="left:1499px;top:952px;width:100px;height:36px;background:#303030;box-sizing:border-box;border:2px solid #2b2b2b;border-top-color:#262626;border-radius:6px;"></div>
<span class="t" style="left:1505.13px;top:959px;font-size:24.5px;color:#707070;">1</span>
<div class="b" style="left:771.00px;top:1006.00px;width:836.00px;height:2.00px;background:#1a1a1a;"></div>
<div class="b" style="left:959px;top:1024px;width:460px;height:48px;background:#585858;box-sizing:border-box;border:2px solid #303030;border-bottom:2px solid #242424;border-radius:6px;"></div>
<span class="t" style="left:1099.35px;top:1035px;font-size:24.5px;color:#ececec;letter-spacing:0.246px;">Add Component</span>
</body></html>
